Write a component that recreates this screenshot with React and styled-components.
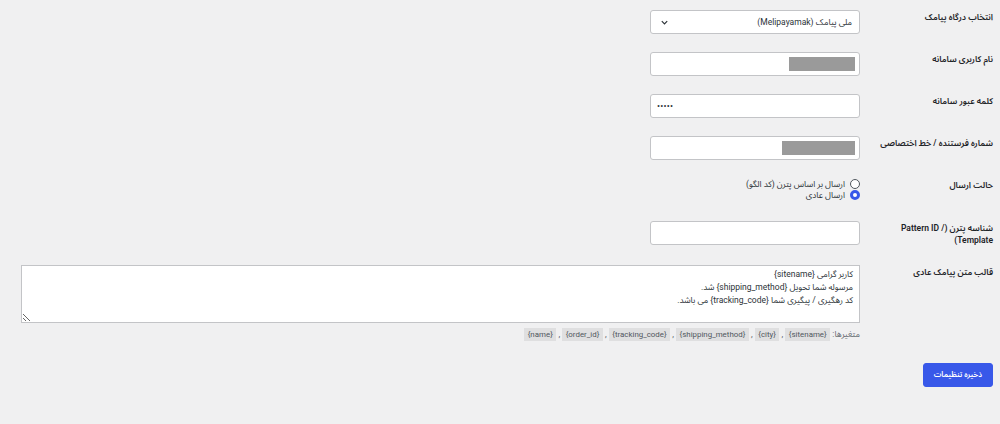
import React from "react";
import styled, { createGlobalStyle } from "styled-components";

const fontStack = `Roboto, "Noto Sans Arabic", "DejaVu Sans", sans-serif`;

const GlobalStyle = createGlobalStyle`
  html, body {
    margin: 0;
    padding: 0;
    background: #f0f0f1;
  }
  body {
    font-family: ${fontStack};
    font-size: 8.5px;
    color: #1d2327;
  }
`;

const Page = styled.div`
  direction: rtl;
  padding: 1px 7px 0 11px;
`;

const Row = styled.div`
  display: grid;
  grid-template-columns: 123px 1fr;
`;

const Th = styled.div`
  padding: 11px 0 10px 8px;
  font-weight: 600;
  font-size: 8.5px;
  line-height: 11.5px;
  text-align: right;
  color: #1d2327;
`;

const Td = styled.div`
  padding: 9px 10px;
`;

const fieldBase = `
  box-sizing: border-box;
  width: 210px;
  height: 24px;
  background: #fff;
  border: 1px solid #c3c4c7;
  border-radius: 3px;
  font-family: ${fontStack};
  font-size: 8.5px;
  color: #2c3338;
`;

const SelectBox = styled.div`
  ${fieldBase}
  display: flex;
  align-items: center;
  justify-content: space-between;
  padding: 0 7px 0 9px;
`;

const Chevron = styled.svg`
  width: 9px;
  height: 9px;
  flex: none;
`;

const FieldBox = styled.div`
  ${fieldBase}
  display: flex;
  align-items: center;
  padding: 0 4px;
`;

const Redacted = styled.span`
  display: block;
  height: 14px;
  width: ${(p) => p.$w}px;
  background: #9a9a9a;
`;

const PasswordInput = styled.input`
  ${fieldBase}
  direction: ltr;
  padding: 0 6px;
  outline: none;
  font-size: 9px;
  letter-spacing: 0.2px;
`;

const TextInput = styled.input`
  ${fieldBase}
  padding: 0 6px;
  outline: none;
`;

const RadioList = styled.div`
  display: flex;
  flex-direction: column;
  padding-bottom: 3px;
`;

const RadioLabel = styled.label`
  display: flex;
  align-items: center;
  gap: 5px;
  height: 11px;
  font-size: 8.5px;
  color: #2c3338;
`;

const Radio = styled.input`
  appearance: none;
  margin: 0;
  box-sizing: border-box;
  flex: none;
  width: 10px;
  height: 10px;
  border-radius: 50%;
  background: #fff;
  border: 1px solid #50575e;
  &:checked {
    border: 3px solid #3858e9;
  }
`;

const TextArea = styled.textarea`
  display: block;
  box-sizing: border-box;
  width: 100%;
  height: 58px;
  margin: 0;
  padding: 2px 6px;
  background: #fff;
  border: 1px solid #c3c4c7;
  border-radius: 0;
  font-family: ${fontStack};
  font-size: 8.5px;
  line-height: 13px;
  color: #2c3338;
  outline: none;
`;

const Description = styled.p`
  margin: 4px 0 0;
  font-size: 8.5px;
  line-height: 14px;
  color: #646970;
`;

const Tag = styled.code`
  font-family: ${fontStack};
  font-size: 7.9px;
  background: rgba(0, 0, 0, 0.07);
  padding: 2px 3.5px;
  color: #50575e;
`;

const Submit = styled.div`
  padding-top: 12px;
`;

const Button = styled.button`
  height: 24px;
  padding: 0 10px;
  border: 1px solid #3858e9;
  border-radius: 3px;
  background: #3858e9;
  color: #fff;
  font-family: ${fontStack};
  font-size: 7.6px;
  font-weight: 600;
`;

const variables = ["{sitename}", "{city}", "{shipping_method}", "{tracking_code}", "{order_id}", "{name}"];

const template = `کاربر گرامی {sitename}
مرسوله شما تحویل {shipping_method} شد.
کد رهگیری / پیگیری شما {tracking_code} می باشد.`;

export default function App() {
  return (
    <>
      <GlobalStyle />
      <Page>
        <Row>
          <Th>انتخاب درگاه پیامک</Th>
          <Td>
            <SelectBox>
              <span>ملی پیامک (Melipayamak)</span>
              <Chevron viewBox="0 0 10 10">
                <path d="M2 3.5 L5 6.5 L8 3.5" fill="none" stroke="#2c3338" strokeWidth="1.3" />
              </Chevron>
            </SelectBox>
          </Td>
        </Row>
        <Row>
          <Th>نام کاربری سامانه</Th>
          <Td>
            <FieldBox>
              <Redacted $w={66} />
            </FieldBox>
          </Td>
        </Row>
        <Row>
          <Th>کلمه عبور سامانه</Th>
          <Td>
            <PasswordInput type="password" defaultValue="12345" readOnly />
          </Td>
        </Row>
        <Row>
          <Th>شماره فرستنده / خط اختصاصی</Th>
          <Td>
            <FieldBox>
              <Redacted $w={73} />
            </FieldBox>
          </Td>
        </Row>
        <Row>
          <Th>حالت ارسال</Th>
          <Td>
            <RadioList>
              <RadioLabel>
                <Radio type="radio" name="mode" />
                ارسال بر اساس پترن (کد الگو)
              </RadioLabel>
              <RadioLabel>
                <Radio type="radio" name="mode" defaultChecked />
                ارسال عادی
              </RadioLabel>
            </RadioList>
          </Td>
        </Row>
        <Row>
          <Th>شناسه پترن (Pattern ID / Template)</Th>
          <Td>
            <TextInput type="text" />
          </Td>
        </Row>
        <Row>
          <Th>قالب متن پیامک عادی</Th>
          <Td>
            <TextArea defaultValue={template} />
            <Description>
              متغیرها:{" "}
              {variables.map((v, i) => (
                <React.Fragment key={v}>
                  {i > 0 && " , "}
                  <Tag>{v}</Tag>
                </React.Fragment>
              ))}
            </Description>
          </Td>
        </Row>
        <Submit>
          <Button type="button">ذخیره تنظیمات</Button>
        </Submit>
      </Page>
    </>
  );
}
